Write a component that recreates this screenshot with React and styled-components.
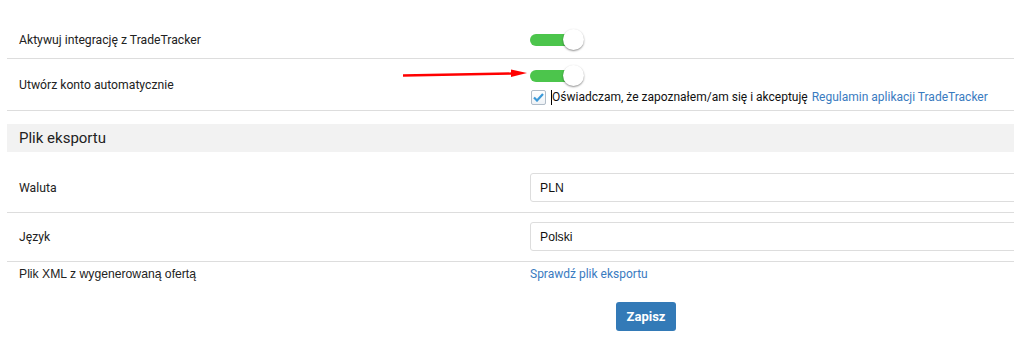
import styled, { createGlobalStyle } from 'styled-components';

const GlobalStyle = createGlobalStyle`
	body {
		margin: 0;
		background: #fff;
		overflow: hidden;
		font-family: Roboto, "Liberation Sans", Arial, sans-serif;
		font-size: 12px;
		color: #222;
	}
`;

const Page = styled.div`
	padding: 22px 0 0 7px;
	width: 1100px;
`;

const Row = styled.div`
	display: grid;
	grid-template-columns: 523px 1fr;
	align-items: center;
	min-height: ${({ height }) => height || 'auto'};
	padding: ${({ pad }) => pad || '0'};
	border-bottom: ${({ noLine }) => (noLine ? 'none' : '1px solid #ddd')};
	position: relative;
`;

const Label = styled.div`
	padding-left: 12px;
	font-family: ${({ arial }) => (arial ? '"Liberation Sans", Arial, sans-serif' : 'Roboto, sans-serif')};
	font-size: ${({ size }) => size || '12.2px'};
	color: #222;
`;

const Cell = styled.div`
	display: flex;
	flex-direction: column;
	align-items: flex-start;
	gap: ${({ gap }) => gap || '0'};
`;

const Toggle = styled.div`
	position: relative;
	width: 54px;
	height: 22px;
	display: flex;
	align-items: center;
`;

const Track = styled.div`
	width: 44px;
	height: 12px;
	border-radius: 6px;
	background: #4cc54c;
`;

const Knob = styled.div`
	position: absolute;
	left: 33px;
	top: 0;
	width: 21px;
	height: 21px;
	border-radius: 50%;
	background: #fff;
	box-shadow: 0 1px 2px rgba(0, 0, 0, 0.45);
`;

const Consent = styled.div`
	display: flex;
	align-items: center;
	font-size: 12px;
	color: #111;
`;

const Box = styled.span`
	width: 13px;
	height: 13px;
	border: 1px solid #b0bcc8;
	border-radius: 2px;
	background: linear-gradient(#fff, #eef2f6);
	display: inline-flex;
	align-items: center;
	justify-content: center;
	margin: 0 5px 0 1px;
`;

const Caret = styled.span`
	border-left: 1px solid #000;
	height: 15px;
`;

const Link = styled.a`
	color: #3a7bbf;
	font-size: 12px;
	text-decoration: none;
	margin-left: ${({ gap }) => gap || '0'};
`;

const Arrow = styled.svg`
	position: absolute;
	left: 396px;
	top: 9px;
`;

const Section = styled.div`
	margin: 13px 0 11px;
	height: 28px;
	background: #f2f2f2;
	display: flex;
	align-items: center;
	padding-left: 12px;
	font-size: 15px;
	color: #222;
`;

const Input = styled.div`
	width: 100%;
	box-sizing: border-box;
	height: 29px;
	border: 1px solid #ddd;
	border-radius: 3px;
	display: flex;
	align-items: center;
	padding-left: 9px;
	font-family: "Liberation Sans", Arial, sans-serif;
	font-size: 12.2px;
	color: #111;
`;

const Footer = styled.div`
	display: flex;
	padding: 21px 0 0 609px;
`;

const Button = styled.button`
	width: 60px;
	height: 29px;
	border: none;
	border-radius: 3px;
	background: #337ab7;
	color: #fff;
	font-family: Roboto, sans-serif;
	font-weight: bold;
	font-size: 13px;
`;

const Switch = () => (
	<Toggle>
		<Track />
		<Knob />
	</Toggle>
);

export default function App() {
	return (
		<Page>
			<GlobalStyle />
			<Row height="36px">
				<Label>Aktywuj integrację z TradeTracker</Label>
				<Cell>
					<Switch />
				</Cell>
			</Row>
			<Row height="51px">
				<Label>Utwórz konto automatycznie</Label>
				<Cell gap="3px">
					<Switch />
					<Consent>
						<Box>
							<svg width="11" height="9" viewBox="0 0 11 9">
								<path d="M1 4.5 L4 7.5 L10 1" fill="none" stroke="#3b99d8" strokeWidth="2.2" />
							</svg>
						</Box>
						<Caret />
						Oświadczam, że zapoznałem/am się i akceptuję
						<Link gap="4px">Regulamin aplikacji TradeTracker</Link>
					</Consent>
				</Cell>
				<Arrow width="124" height="12" viewBox="0 0 124 12">
					<path d="M0 7.5 L110 5.5" stroke="#f00" strokeWidth="2.4" />
					<path d="M108 1.5 L124 5 L108 9 Z" fill="#f00" />
				</Arrow>
			</Row>
			<Section>Plik eksportu</Section>
			<Row pad="10px 0">
				<Label>Waluta</Label>
				<Input>PLN</Input>
			</Row>
			<Row pad="9px 0 10px">
				<Label>Język</Label>
				<Input>Polski</Input>
			</Row>
			<Row noLine pad="5px 0 0">
				<Label arial size="12.2px">Plik XML z wygenerowaną ofertą</Label>
				<div>
					<Link>Sprawdź plik eksportu</Link>
				</div>
			</Row>
			<Footer>
				<Button>Zapisz</Button>
			</Footer>
		</Page>
	);
}
